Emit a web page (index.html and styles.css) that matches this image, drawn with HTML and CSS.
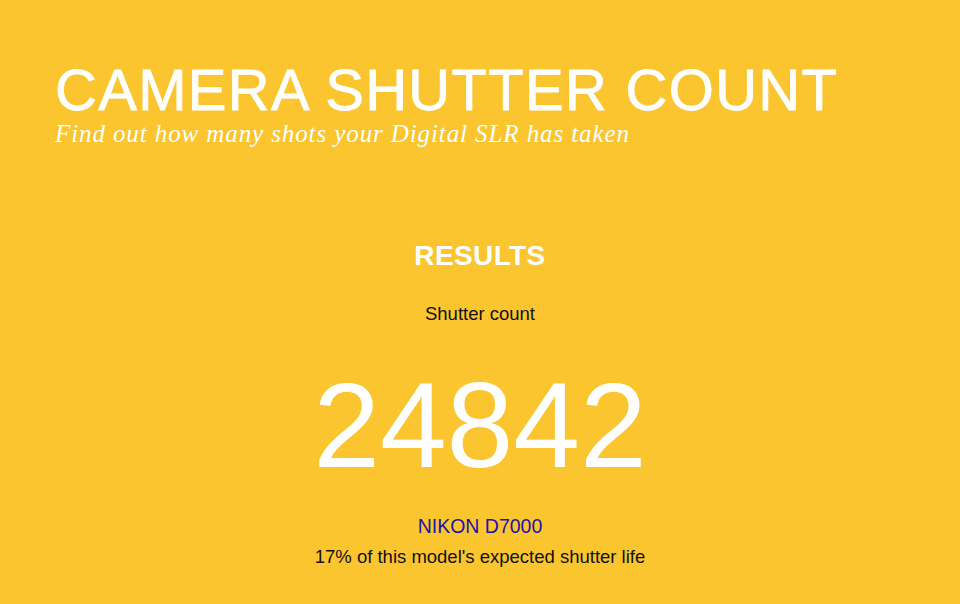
FILE: index.html
```html
<!DOCTYPE html>
<html lang="en">
<head>
  <meta charset="UTF-8">
  <title>Camera Shutter Count</title>
  <link rel="stylesheet" href="styles.css">
</head>
<body>

  <header class="masthead">
    <h1>CAMERA SHUTTER COUNT</h1>
    <p class="tagline">Find out how many shots your Digital SLR has taken</p>
  </header>

  <section class="results">
    <h2>RESULTS</h2>
    <p class="label">Shutter count</p>
    <div class="count">24842</div>
    <a class="model" href="#">NIKON D7000</a>
    <p class="life">17% of this model's expected shutter life</p>
  </section>

</body>
</html>
```

FILE: styles.css
```css
body {
  margin: 0;
  background: #fbc52f;
  font-family: 'Liberation Sans', Arial, sans-serif;
  color: #111;
}

.masthead {
  padding: 60px 55px 0;
  color: #fff;
}

.masthead h1 {
  margin: 0;
  font-size: 58px;
  font-weight: normal;
  line-height: 60px;
  letter-spacing: 1.3px;
  -webkit-text-stroke: 0.8px #fff;
}

.tagline {
  margin: 0;
  font-family: 'Liberation Serif', Georgia, serif;
  font-style: italic;
  font-size: 25px;
  letter-spacing: 0.9px;
  line-height: 27px;
}

.results {
  display: flex;
  flex-direction: column;
  align-items: center;
  padding-top: 93px;
}

.results h2 {
  margin: 0;
  color: #fff;
  font-size: 28px;
  line-height: 32px;
  letter-spacing: 0.4px;
}

.label {
  margin: 31px 0 0;
  font-size: 18.5px;
  line-height: 22px;
}

.count {
  margin-top: 40px;
  color: #fff;
  font-size: 120px;
  line-height: 120px;
}

.model {
  margin-top: 29px;
  color: #1f14a8;
  font-size: 19.5px;
  line-height: 24px;
  text-decoration: none;
}

.life {
  margin: 8px 0 0;
  font-size: 18.5px;
  line-height: 22px;
}
```
